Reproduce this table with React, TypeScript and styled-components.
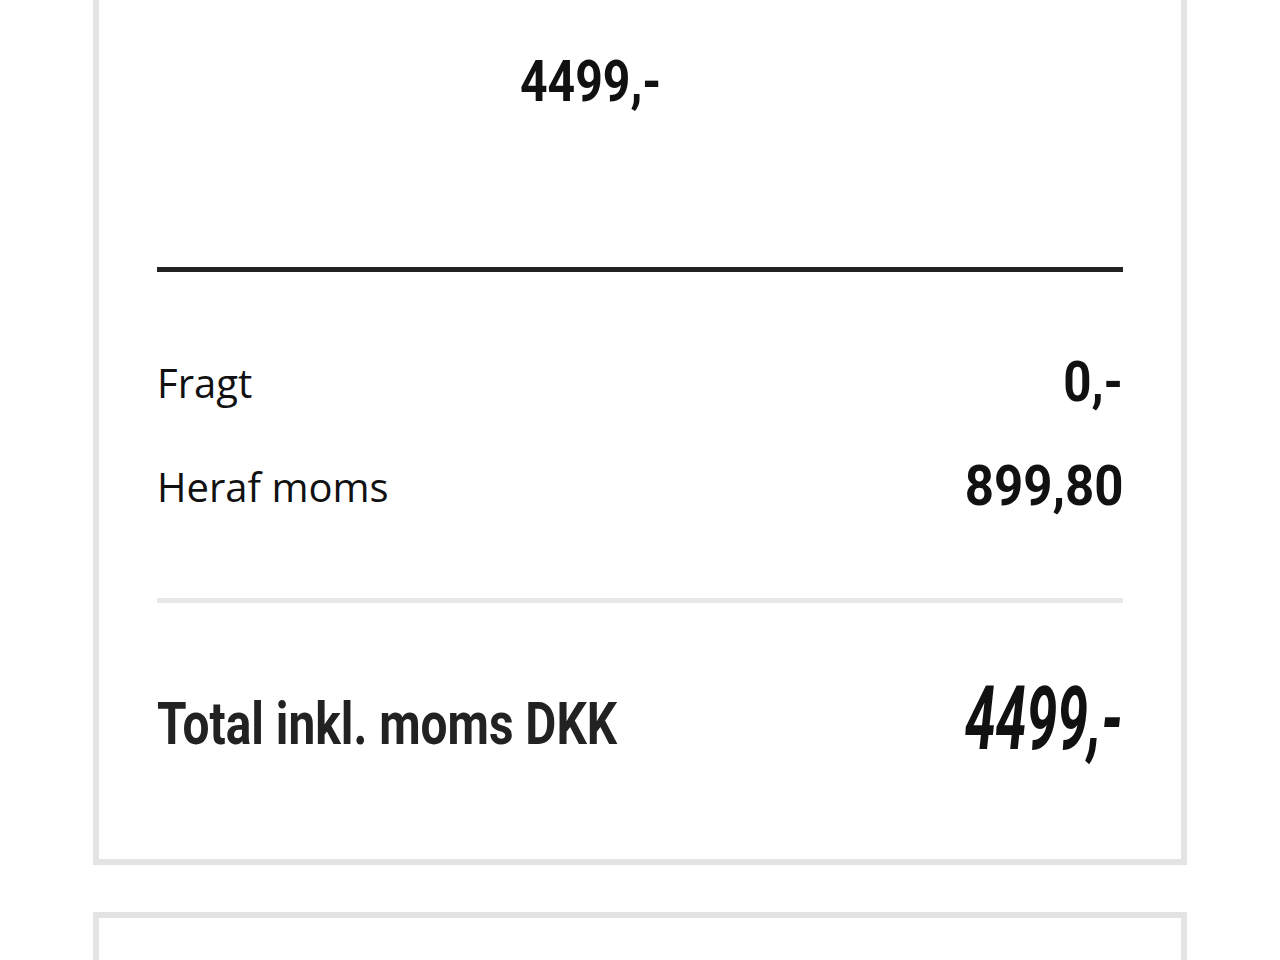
import React from "react";
import styled, { createGlobalStyle } from "styled-components";

const GlobalStyle = createGlobalStyle`
  html, body {
    margin: 0;
    padding: 0;
    background: #fff;
  }
  body {
    font-family: "Open Sans", "Noto Sans", sans-serif;
    color: #111;
  }
`;

const Page = styled.div`
  width: 1280px;
  height: 960px;
  overflow: hidden;
  padding: 0 93px;
  box-sizing: border-box;
  display: flex;
  flex-direction: column;
  gap: 47px;
`;

const Card = styled.section<{ $open?: boolean }>`
  flex-shrink: 0;
  border: 6px solid #e3e3e3;
  border-top-width: ${(p) => (p.$open ? "0" : "6px")};
  padding: 0 58px;
  background: #fff;
  min-height: ${(p) => (p.$open ? "0" : "60px")};
`;

// condensed bold numbers (DIN-like), narrowed with scaleX
const Num = styled.span<{ $size: number; $scale: number; $right?: boolean; $italic?: boolean; $soft?: boolean }>`
  display: inline-block;
  font-family: "Roboto", "Liberation Sans", sans-serif;
  font-weight: 700;
  font-size: ${(p) => p.$size}px;
  font-style: ${(p) => (p.$italic ? "italic" : "normal")};
  color: ${(p) => (p.$soft ? "#222" : "#111")};
  line-height: 1;
  white-space: nowrap;
  transform: scaleX(${(p) => p.$scale});
  transform-origin: ${(p) => (p.$right ? "right" : "left")} center;
`;

const ProductRow = styled.div`
  display: flex;
  padding: 52px 0 0 363px;
  height: 267px;
  box-sizing: border-box;
`;

const Rule = styled.hr<{ $light?: boolean }>`
  margin: 0;
  border: none;
  height: 5px;
  background: ${(p) => (p.$light ? "#e8e8e8" : "#222")};
`;

const Lines = styled.div`
  display: flex;
  flex-direction: column;
  gap: 40px;
  padding: 78px 0 80px;
`;

const Line = styled.div`
  display: flex;
  justify-content: space-between;
  align-items: center;
  height: 64px;
`;

const Label = styled.span`
  font-size: 40px;
  color: #111;
`;

const TotalRow = styled.div`
  display: flex;
  justify-content: space-between;
  align-items: center;
  padding: 80px 0 96px;
`;

export default function App() {
  return (
    <>
      <GlobalStyle />
      <Page>
        <Card $open>
          <ProductRow>
            <Num $size={58} $scale={0.83}>4499,-</Num>
          </ProductRow>
          <Rule />
          <Lines>
            <Line>
              <Label>Fragt</Label>
              <Num $size={56} $scale={0.88} $right>0,-</Num>
            </Line>
            <Line>
              <Label>Heraf moms</Label>
              <Num $size={56} $scale={0.91} $right>899,80</Num>
            </Line>
          </Lines>
          <Rule $light />
          <TotalRow>
            <Num $size={59} $scale={0.81} $soft>Total inkl. moms DKK</Num>
            <Num $size={88} $scale={0.63} $right $italic style={{ marginTop: -8 }}>4499,-</Num>
          </TotalRow>
        </Card>
        <Card />
      </Page>
    </>
  );
}
